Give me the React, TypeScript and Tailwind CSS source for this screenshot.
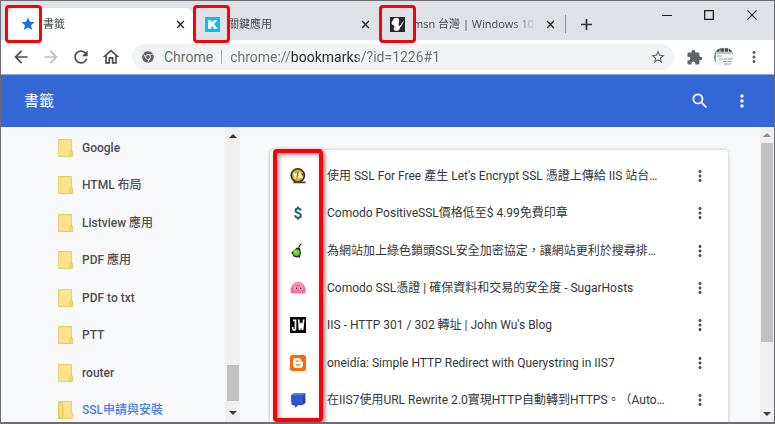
import { useState } from 'react';
import type { ReactNode } from 'react';
import { FaChrome } from 'react-icons/fa';
import {
  MdArrowBack,
  MdArrowForward,
  MdExtension,
  MdMoreVert,
  MdOutlineHome,
  MdRefresh,
  MdSearch,
  MdStar,
  MdStarBorder,
} from 'react-icons/md';

const folders = [
  { name: 'Google' },
  { name: 'HTML 布局' },
  { name: 'Listview 應用' },
  { name: 'PDF 應用' },
  { name: 'PDF to txt' },
  { name: 'PTT' },
  { name: 'router' },
  { name: 'SSL申請與安裝', open: true },
];

function CoinIcon() {
  return (
    <svg viewBox="0 0 16 16" className="size-4">
      <circle cx="7.8" cy="7.4" r="6.6" fill="#dba915" stroke="#33302a" strokeWidth="1.6" />
      <path d="M3.600 5l1.700 2.600L7.200 5M5.300 7.600v3" fill="none" stroke="#fff" strokeWidth="1.500" />
      <path d="M8.200 10.600L9.900 5.200l2.500 5M9 9h2.800" fill="none" stroke="#fff" strokeWidth="1.500" />
      <path d="M7.400 4l.4 4M12.200 5l.6 3" stroke="#4a4020" strokeWidth=".7" />
      <path d="M3.500 14.400h12" stroke="#4a4540" strokeWidth="1.800" />
    </svg>
  );
}

function DollarIcon() {
  return (
    <svg viewBox="0 0 16 16" className="size-4">
      <path
        d="M10.600 5.600C10.400 4 9.500 3.400 8 3.400c-1.500 0-2.500.7-2.500 2 0 1.500 1.200 2 2.600 2.500 1.500.5 2.700 1 2.700 2.700 0 1.400-1.100 2.200-2.700 2.200-1.700 0-2.800-.9-2.900-2.600"
        fill="none"
        stroke="#1d6670"
        strokeWidth="2"
      />
      <path d="M8 1.500v2M8 12.500v2.200" stroke="#1d6670" strokeWidth="1.800" />
    </svg>
  );
}

function SeedIcon() {
  return (
    <svg viewBox="0 0 16 16" className="size-4">
      <path d="M11.300.8C9.300 2 8.500 3.800 9 6l.4 8.800" fill="none" stroke="#222" strokeWidth="1.200" />
      <path d="M1.400 9.600L7 4.600l3 .8 1 4.400-1 3.700-3.400 1-3-1z" fill="#1f241c" />
      <circle cx="6.500" cy="9.600" r="3.400" fill="#5fd01c" />
      <circle cx="5.900" cy="8.700" r="1.200" fill="#a6f06a" />
    </svg>
  );
}

function BlobIcon() {
  return (
    <svg viewBox="0 0 16 16" className="size-4">
      <path
        d="M1.600 13.400C.4 13 .2 11.600.8 10.600.1 9.500.5 8 1.400 7.300 1.800 4 4.500 2 8 2s6.500 2 6.800 5.200c.9.9 1.200 2.200.6 3.300.5 1.400 0 2.600-1.200 2.900z"
        fill="#f5709f"
      />
      <path d="M3 6c1-2 2.800-2.700 5-2.700s4 .8 5 2.600" stroke="#fbaac8" strokeWidth="1.200" fill="none" />
      <circle cx="6" cy="8" r="1.600" fill="#fff" />
      <circle cx="11" cy="8" r="1.600" fill="#fff" />
      <circle cx="6.400" cy="8.200" r=".9" fill="#333" />
      <circle cx="10.800" cy="8.200" r=".9" fill="#333" />
    </svg>
  );
}

function JwIcon() {
  return (
    <svg viewBox="0 0 16 16" className="size-4">
      <rect width="16" height="16" fill="#050505" />
      <path
        d="M5.500 2.500v9.300c0 1-.6 1.300-1.300 1.300s-1.500-.3-1.500-1.500V10M3 3.300h3M8.700 2.500l.8 10.500 1.700-7 1.300 7L13.700 2.500"
        fill="none"
        stroke="#fff"
        strokeWidth="1.700"
      />
    </svg>
  );
}

function BloggerIcon() {
  return (
    <svg viewBox="0 0 16 16" className="size-4">
      <rect width="16" height="16" rx="2.500" fill="#fb6a09" />
      <path
        d="M6 3h2.500A2.700 2.700 0 0 1 11.200 5.700c0 .8.3 1 .9 1 .6 0 .9.4.9 1V10a3 3 0 0 1-3 3H6a3 3 0 0 1-3-3V6a3 3 0 0 1 3-3z"
        fill="#fff"
      />
      <path d="M6.200 6.100h2M6.200 9.900h3.600" stroke="#fb6a09" strokeWidth="1.400" strokeLinecap="round" />
    </svg>
  );
}

function ChatIcon() {
  return (
    <svg viewBox="0 0 16 16" className="size-4">
      <path d="M1 3.200L3.500 1.400l11.800-.2.200 9.800-2.800 2-5 .2-2 2.600-1-2.300-3-.8z" fill="#2146ad" />
      <path d="M1 3.400l12-.2-.2 9.300-11-.2z" fill="#2f58cc" />
      <path d="M1 3.400l2.500-2 11.800-.2L13 3.400z" fill="#4a76de" />
    </svg>
  );
}

const bookmarks: { title: string; icon: ReactNode }[] = [
  { title: '使用 SSL For Free 產生 Let’s Encrypt SSL 憑證上傳給 IIS 站台…', icon: <CoinIcon /> },
  { title: 'Comodo PositiveSSL價格低至$ 4.99免費印章', icon: <DollarIcon /> },
  { title: '為網站加上綠色鎖頭SSL安全加密協定，讓網站更利於搜尋排…', icon: <SeedIcon /> },
  { title: 'Comodo SSL憑證 | 確保資料和交易的安全度 - SugarHosts', icon: <BlobIcon /> },
  { title: "IIS - HTTP 301 / 302 轉址 | John Wu's Blog", icon: <JwIcon /> },
  { title: 'oneidía: Simple HTTP Redirect with Querystring in IIS7', icon: <BloggerIcon /> },
  { title: '在IIS7使用URL Rewrite 2.0實現HTTP自動轉到HTTPS。（Auto…', icon: <ChatIcon /> },
];

function KeyIcon() {
  return (
    <svg viewBox="0 0 15 15" className="size-[15px]">
      <rect width="15" height="15" fill="#10bdf0" />
      <path d="M3 3.300h3.200v2.700L8.600 3.300h3.800L9 7l3.600 4.700H9L6.900 8.900l-.7.7v2.100H3z" fill="#fff" />
    </svg>
  );
}

function MsnIcon() {
  return (
    <svg viewBox="0 0 15 15" className="size-[15px]">
      <rect width="15" height="15" fill="#26282c" />
      <path
        d="M6 .8c2 0 3.400 1.200 3.200 3.200-.1 1.500-.6 2.200-.6 3.400 0 1.600.8 2.400.6 3.800-.2 1.500-1.400 2.600-2.900 2.600-1.500 0-2.700-.6-2.700-1.800 0-1 1-1.700 1-2.700-.2-1-2.100-1-2.800-2.300-.8-1.500.3-2.500.9-3.200C3.200 2.200 4.200.8 6 .8z"
        fill="#fff"
      />
      <path d="M13.700 3.500c-.5 3-1.700 5.200-3.700 7 0 1.500-1 3-3 3.700 1.300-1.500 1.700-2.500 1.700-4.500C10.500 8 12 6 13.700 3.500z" fill="#fff" />
    </svg>
  );
}

function CloseIcon({ className }: { className: string }) {
  return (
    <svg viewBox="0 0 10 10" className={className} fill="none" stroke="currentColor">
      <path d="M1.200 1.200l7.600 7.600M8.800 1.200L1.200 8.800" />
    </svg>
  );
}

function FolderIcon({ open }: { open?: boolean }) {
  return (
    <svg viewBox="0 0 15 18" className="h-[18px] w-[15px] shrink-0">
      <path d="M.7.7h12.600v10.500l1 1.300v4.800H.7z" fill="#fde38f" stroke="#edcf66" strokeWidth="1.200" />
      {open ? (
        <path d="M.9 1.200c2.500.6 4 1.600 4 3.300v9.500l-1 3.200H.9z" fill="#fbdc7d" stroke="#e3c254" strokeWidth="1" />
      ) : (
        <path d="M13.300 11l-1.700 2v4h2.700v-4.500z" fill="#f8d873" stroke="#e8c95f" strokeWidth=".9" />
      )}
    </svg>
  );
}

function AvatarIcon() {
  return (
    <svg viewBox="0 0 20 20" className="size-5">
      <defs>
        <clipPath id="avatar">
          <circle cx="10" cy="10" r="10" />
        </clipPath>
      </defs>
      <g clipPath="url(#avatar)">
        <rect width="20" height="20" fill="#f2f3f4" />
        <path d="M2 3h17" stroke="#4a4a4a" strokeWidth="3.500" strokeDasharray="3.600 .7" />
        <path d="M0 6h20" stroke="#8b9090" strokeWidth="1" />
        <path d="M.8 4v6" stroke="#2f7fd6" strokeWidth="2" />
        <path d="M.8 9.500v6" stroke="#2aa84a" strokeWidth="2" />
        <path d="M3 9h5M5 12h14M9 14.500h9M10 17h7" stroke="#a0a4a7" strokeWidth="1" strokeDasharray="4 .5" />
      </g>
    </svg>
  );
}

function Tab({ icon, title, active }: { icon: ReactNode; title: string; active?: boolean }) {
  return (
    <div
      className={
        'flex w-[185px] items-center gap-2 rounded-t-lg pr-2 pl-3 ' + (active ? 'bg-white' : '')
      }
    >
      <span className="flex w-[15px] shrink-0 justify-center">{icon}</span>
      <a
        href="#"
        className="min-w-0 flex-1 overflow-hidden text-[11px] leading-4 whitespace-nowrap text-[#45494d] [mask-image:linear-gradient(to_right,black_80%,transparent)]"
      >
        {title}
      </a>
      <button aria-label="關閉分頁" className="text-[#202124]">
        <CloseIcon className="size-[9px] stroke-[1.5]" />
      </button>
    </div>
  );
}

function Arrow({ down, dim }: { down?: boolean; dim?: boolean }) {
  return (
    <svg viewBox="0 0 8 4" className={'h-1 w-2 ' + (dim ? 'fill-[#8c8c8c]' : 'fill-[#3c3c3c]')}>
      <path d={down ? 'M0 0h8L4 4z' : 'M0 4h8L4 0z'} />
    </svg>
  );
}

export default function App() {
  const [url, setUrl] = useState('chrome://bookmarks/?id=1226#1');

  return (
    <div
      lang="zh-TW"
      className="relative flex h-screen flex-col overflow-hidden border border-b-2 border-[#6c6c72] bg-white font-['Roboto','Noto_Sans_CJK_TC',sans-serif] [text-spacing-trim:space-all]"
    >
      <div className="flex h-[39px] shrink-0 bg-[#dee1e6] pt-[7px] pl-[7px] font-['Open_Sans','Noto_Sans_CJK_TC',sans-serif]">
        <Tab active icon={<MdStar className="size-4 shrink-0 text-[#1a73e8]" />} title="書籤" />
        <Tab icon={<KeyIcon />} title="關鍵應用" />
        <Tab icon={<MsnIcon />} title="msn 台灣 | Windows 10" />
        <div className="flex items-center gap-[15px] pl-[2px]">
          <span className="h-[18px] w-px bg-[#8f9399]" />
          <button aria-label="新增分頁" className="text-[#2f3235]">
            <svg viewBox="0 0 11 11" className="size-[11px]" stroke="currentColor" strokeWidth="1.700">
              <path d="M5.500 0v11M0 5.500h11" />
            </svg>
          </button>
        </div>
        <div className="ml-auto flex h-[13px] items-center gap-8 pr-4 text-[#1c1c1c]">
          <button aria-label="最小化">
            <svg viewBox="0 0 10 10" className="size-[10px]" stroke="currentColor">
              <path d="M0 5.500h10" />
            </svg>
          </button>
          <button aria-label="最大化">
            <svg viewBox="0 0 10 10" className="size-[10px]" fill="none" stroke="currentColor" strokeWidth="1.300">
              <path d="M.7.7h8.600v8.600H.7z" />
            </svg>
          </button>
          <button aria-label="關閉">
            <CloseIcon className="size-3 stroke-1" />
          </button>
        </div>
      </div>

      <div className="flex h-[35px] shrink-0 items-center border-b border-[#8fa9d6] bg-white pr-[11px] pl-[10px] text-[#5f6368]">
        <div className="flex gap-[10px]">
          <button aria-label="上一頁" className="text-[#4b4f53]"><MdArrowBack className="size-5" /></button>
          <button aria-label="下一頁" className="text-[#babcbe]"><MdArrowForward className="size-5" /></button>
          <button aria-label="重新載入" className="text-[#4b4f53]"><MdRefresh className="size-5" /></button>
          <button aria-label="首頁" className="text-[#4b4f53]"><MdOutlineHome className="size-5" /></button>
        </div>
        <div className="ml-[11px] flex h-[26px] flex-1 items-center rounded-full bg-[#f1f3f4] pr-2 pl-[10px] text-[14px] leading-5">
          <FaChrome className="mr-[10px] size-3 shrink-0" />
          <label htmlFor="url" className="text-[#6b6f73]">Chrome</label>
          <span className="mx-2 h-[14px] w-px bg-[#a5a8ab]" />
          <input
            id="url"
            value={url}
            onChange={(e) => setUrl(e.target.value)}
            className="min-w-0 flex-1 bg-[linear-gradient(to_right,#6b6f73_60px,#26282b_60px,#26282b_127px,#6b6f73_127px)] bg-clip-text text-transparent caret-black outline-none"
          />
          <button aria-label="加入書籤"><MdStarBorder className="size-4" /></button>
        </div>
        <button aria-label="擴充功能" className="ml-3"><MdExtension className="size-[17px]" /></button>
        <button aria-label="個人資料" className="mx-[11px]"><AvatarIcon /></button>
        <button aria-label="選單"><MdMoreVert className="size-[18px]" /></button>
      </div>

      <header className="flex h-[52px] shrink-0 items-center bg-[#3367d6] pr-[22px] pl-[23px] text-white">
        <h1 className="flex-1 text-[15px] leading-5">書籤</h1>
        <button aria-label="搜尋" className="mr-[22px]"><MdSearch className="size-5" /></button>
        <button aria-label="更多動作"><MdMoreVert className="size-5" /></button>
      </header>

      <div className="flex min-h-0 flex-1 bg-[#f8f9fa]">
        <nav className="flex w-[239px] shrink-0">
          <ul className="flex h-[302px] flex-1 flex-col pt-[2px] pl-[57px]">
            {folders.map((folder) => (
              <li key={folder.name} className="flex flex-1 items-center gap-[9px]">
                <FolderIcon open={folder.open} />
                <a
                  href="#"
                  className={
                    'text-[12px] leading-4 font-medium ' + (folder.open ? 'text-[#4a7df0]' : 'text-[#4c4f53]')
                  }
                >
                  {folder.name}
                </a>
              </li>
            ))}
          </ul>
          <div className="flex w-[15px] flex-col items-center bg-[#f0f0f0] py-[7px]">
            <Arrow />
            <div className="mt-auto mb-[10px] h-9 w-3 bg-[#c1c1c1]" />
            <Arrow down />
          </div>
        </nav>

        <main className="min-w-0 flex-1 overflow-hidden px-[30px] pt-[23px]">
          <ul className="mr-[2px] flex h-[300px] flex-col rounded-t bg-white pt-[7px] pb-[31px] shadow-[0_0_3px_1px_rgba(60,64,67,0.2)]">
            {bookmarks.map((bookmark) => (
              <li key={bookmark.title} className="flex flex-1 items-center pr-[19px] pl-5">
                <span className="mr-[21px] shrink-0">{bookmark.icon}</span>
                <a href="#" className="min-w-0 flex-1 truncate text-[12px] leading-4 text-[#333639]">
                  {bookmark.title}
                </a>
                <button aria-label="更多動作" className="text-[#4b4f53]">
                  <MdMoreVert className="size-[18px]" />
                </button>
              </li>
            ))}
          </ul>
        </main>

        <div className="flex w-[14px] shrink-0 flex-col items-center bg-[#f0f0f0] py-[6px]">
          <Arrow dim />
          <div className="mt-[6px] mb-[70px] w-3 flex-1 bg-[#c1c1c1]" />
          <Arrow down />
        </div>
      </div>

      {/* highlight boxes over the favicons */}
      <div className="pointer-events-none absolute top-1 left-1 h-[38px] w-[37px] rounded-sm border-[3px] border-[#fb0007]" />
      <div className="pointer-events-none absolute top-1 left-48 h-[38px] w-[37px] rounded-sm border-[3px] border-[#fb0007]" />
      <div className="pointer-events-none absolute top-1 left-[378px] h-[38px] w-[37px] rounded-sm border-[3px] border-[#fb0007]" />
      <div className="pointer-events-none absolute top-[148px] bottom-0 left-[272px] w-[50px] rounded-sm border-4 border-[#fb0007] shadow-[2px_2px_4px_rgba(0,0,0,0.5),inset_2px_2px_4px_rgba(0,0,0,0.4)]" />
    </div>
  );
}
